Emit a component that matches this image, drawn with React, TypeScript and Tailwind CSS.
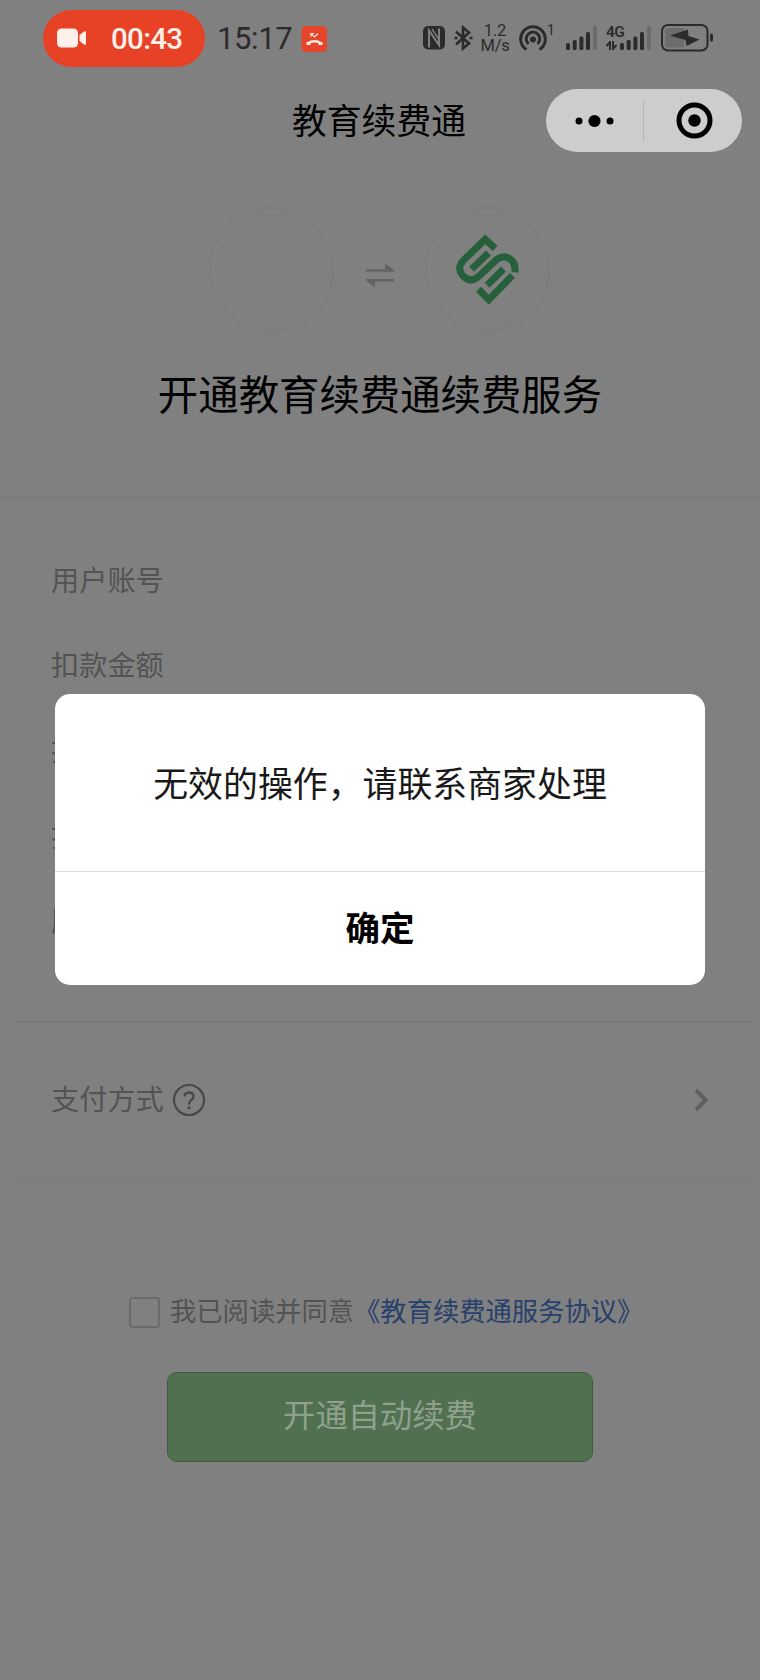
import React from "react";

const rows = ["用户账号", "扣款金额", "扣款周期", "扣款时间", "服务说明"];

function SignalBars() {
  return (
    <g fill="#2b2b2b">
      <rect x="0" y="17" width="4" height="7" rx="1.5" />
      <rect x="6.7" y="14" width="4" height="10" rx="1.5" />
      <rect x="13.4" y="10.5" width="4" height="13.5" rx="1.5" />
      <rect x="20" y="6" width="4" height="18" rx="1.5" />
      <rect x="27" y="0" width="4" height="24" rx="1.5" fill="#6b6b6b" />
    </g>
  );
}

function StatusBar() {
  return (
    <header className="flex h-[76px] items-center pl-[43px] font-[Roboto,sans-serif]">
      <div className="flex h-[57px] w-[162px] items-center rounded-full bg-[#e84226] pl-[14px] text-[#fff0ea]">
        <svg width="30" height="20" viewBox="0 0 30 20" fill="currentColor">
          <rect x="0" y="0.5" width="21" height="19" rx="4.5" />
          <path d="M22.5 7 27 3.6Q29 2.5 29 4.5V15.5Q29 17.5 27 16.4L22.5 13Z" />
        </svg>
        <span className="mt-[3px] ml-[24px] text-[29.5px] leading-none font-medium tracking-[-0.7px]">00:43</span>
      </div>
      <span className="ml-[12px] w-[77px] text-[31px] leading-none tracking-[-0.4px] whitespace-nowrap text-[#2b2b2b]">15:17</span>
      <svg className="mt-[2px] ml-[7px]" width="28" height="28" viewBox="0 0 28 28">
        <rect x="0.5" y="1" width="25.5" height="26" rx="4.5" fill="#e6452c" />
        <path d="M6.500 18.500Q13.500 14 20.500 18.500" fill="none" stroke="#ffe9df" strokeWidth="2.500" />
        <path d="M5.500 17v3h4v-2.500M21.500 17v3h-4v-2.500" fill="#ffe9df" />
        <path d="M10 11.500V8.500h3M10 8.500 13.500 12 17 8.500" fill="none" stroke="#ffe9df" strokeWidth="1.200" />
      </svg>
      <svg className="ml-[94px]" width="23" height="24" viewBox="0 0 23 24">
        <rect x="0" y="0" width="22" height="23.500" rx="5" fill="#2b2b2b" />
        <path d="M6 21.500V4.500L16 19V2.500" fill="none" stroke="#808080" strokeWidth="2" />
        <path d="M9 3 16 13.500" fill="none" stroke="#808080" strokeWidth="1.400" />
      </svg>
      <svg className="ml-[8px]" width="19" height="26" viewBox="0 0 19 26" fill="none" stroke="#2b2b2b" strokeWidth="2.600">
        <path d="M2 6.500 15 18.500 9 23.500V2.500L15 7.500 2 19.500" />
        <path d="M0.500 13h3M15.500 13h3" />
      </svg>
      <div className="ml-[7px] flex w-[30px] flex-col items-center text-[16.5px] leading-[15.5px] tracking-[-0.2px] text-[#2b2b2b]">
        <span>1.2</span>
        <span>M/s</span>
      </div>
      <svg className="ml-[9px]" width="28" height="27" viewBox="0 0 28 27" fill="none" stroke="#2b2b2b" strokeWidth="3">
        <path d="M7.500 24.500A12.300 12.300 0 1 1 20.500 24.500" />
        <path d="M9.500 19A6.800 6.800 0 1 1 18.500 19" />
        <circle cx="14" cy="14.500" r="3" fill="#2b2b2b" stroke="none" />
      </svg>
      <span className="w-[8px] self-start pt-[23px] text-[14px] leading-[14px] text-[#2b2b2b]">1</span>
      <svg className="ml-[11px]" width="32" height="24" viewBox="0 0 32 24"><SignalBars /></svg>
      <div className="relative ml-[22px] h-[24px] w-[32px]">
        <svg width="32" height="24" viewBox="0 0 32 24"><SignalBars /></svg>
        <span className="absolute top-[-1px] left-[-14px] text-[15.5px] leading-[14px] font-semibold tracking-[-0.7px] text-[#2b2b2b]">4G</span>
        <svg className="absolute top-[15px] left-[-14px]" width="11" height="9" viewBox="0 0 11 9" fill="none" stroke="#2b2b2b" strokeWidth="2">
          <path d="M4 9V1L0.500 5M7 0V8L10.500 4" />
        </svg>
      </div>
      <svg className="ml-[9px]" width="53" height="28" viewBox="0 0 53 28">
        <rect x="1" y="1" width="45.500" height="25.500" rx="6" fill="none" stroke="#2b2b2b" strokeWidth="2" />
        <path d="M7 4H23V23.500H7Q4 23.500 4 20.500V7Q4 4 7 4Z" fill="#6c6c6c" />
        <path d="M9 11.500 27 5.500 27.500 12 38.500 15.500 25.500 22 24.500 16Z" fill="#2b2b2b" />
        <rect x="49" y="9.500" width="3" height="8" rx="1.500" fill="#2b2b2b" />
      </svg>
    </header>
  );
}

function TitleBar() {
  return (
    <div className="flex h-[89px] items-start pl-[292px]">
      <h1 className="mt-[17px] w-[175px] text-[34.8px] leading-[52px] whitespace-nowrap text-black">教育续费通</h1>
      <div className="mt-[13px] ml-[79px] flex h-[63px] w-[196px] items-center rounded-full bg-[#cdcdcd]">
        <div className="flex w-[97px] justify-center">
          <svg width="40" height="14" viewBox="0 0 40 14">
            <circle cx="4" cy="7" r="3.500" />
            <circle cx="19.500" cy="7" r="6.100" />
            <circle cx="35" cy="7" r="3.500" />
          </svg>
        </div>
        <div className="h-[42px] w-px bg-[#b4b4b4]" />
        <svg className="ml-[32px]" width="37" height="37" viewBox="0 0 37 37">
          <circle cx="18.500" cy="18.500" r="15.500" fill="none" stroke="#000" strokeWidth="5" />
          <circle cx="18.500" cy="18.500" r="6.200" />
        </svg>
      </div>
    </div>
  );
}

function Modal() {
  return (
    <div role="dialog" className="absolute top-[694px] left-[55px] flex h-[291px] w-[650px] flex-col rounded-[15px] bg-white text-center">
      <p className="h-[178px] border-b border-[#dedede] pt-[62px] text-[34.9px] leading-[52px] text-[#191919]">无效的操作，请联系商家处理</p>
      <button className="flex-1 pb-[5px] text-[34.5px] leading-[52px] font-bold text-black">确定</button>
    </div>
  );
}

export default function App() {
  return (
    <div className="relative h-[1680px] w-[760px] overflow-hidden bg-[#808080] font-['Noto_Sans_CJK_SC',sans-serif]">
      <StatusBar />
      <TitleBar />
      <section className="h-[333px] border-b border-[#7a7a7a] pt-[42px]">
        <div className="flex items-center pl-[209px]">
          <div className="h-[125px] w-[125px] rounded-full border-2 border-[#7d7d7d]" />
          <svg className="mt-[11px] ml-[31px]" width="30" height="24" viewBox="0 0 30 24" fill="#636363">
            <path d="M1 6.200H20V0.500L29 7V8.800H1ZM29 16V18.600H10V24.500L1 17.500V16Z" />
          </svg>
          <div className="ml-[30px] flex h-[125px] w-[125px] items-center justify-center rounded-full border-2 border-[#7d7d7d]">
            <svg width="67" height="73" viewBox="765 98 200 219" fill="none" stroke="#26603a" strokeWidth="21">
              <path d="M888 144 858 117 793 180Q772 202 790 225Q813 250 838 229L892 178Q916 160 938 180Q950 192 947 216" />
              <path d="M868 158 817 207M913 206 864 255M940 225 869 298 838 267" />
            </svg>
          </div>
        </div>
        <h2 className="mt-[31px] text-center text-[40.4px] leading-[60px] text-black">开通教育续费通续费服务</h2>
      </section>
      <section className="mr-[8px] ml-[16px] flex h-[525px] flex-col border-b-2 border-[#797979] pt-[38px] pl-[35px] text-[28.2px] text-[#535353]">
        {rows.map((label) => (
          <div key={label} className="h-[85.2px] leading-[85px]">{label}</div>
        ))}
      </section>
      <section className="mr-[8px] ml-[16px] flex h-[156px] items-center border-b border-[#7a7a7a] pl-[35px] text-[28.2px] text-[#535353]">
        <span className="-mt-[6px] leading-[42px]">支付方式</span>
        <svg className="-mt-[2px] ml-[8px]" width="34" height="34" viewBox="0 0 34 34" fill="none" stroke="#484848" strokeWidth="2.200">
          <circle cx="17" cy="17" r="15" />
          <path d="M12.500 13.500Q12.800 9.500 17 9.500Q21.500 9.500 21.500 13.500Q21.500 15.500 19 17.300Q17 18.700 17 21.500" strokeWidth="2.400" />
          <circle cx="17" cy="24.800" r="1.600" fill="#484848" stroke="none" />
        </svg>
        <svg className="-mt-[2px] mr-[43px] ml-auto" width="15" height="24" viewBox="0 0 15 24" fill="none" stroke="#606060" strokeWidth="4">
          <path d="M2 2 11.500 12 2 22" />
        </svg>
      </section>
      <div className="mt-[111px] flex h-[40px] items-center pl-[129px] text-[26.3px] leading-[40px] text-[#535353]">
        <span className="mt-[5px] h-[31px] w-[31px] rounded-[3px] border-2 border-[#6b6b6b]" />
        <span className="ml-[10px] whitespace-nowrap">我已阅读并同意</span>
        <a className="whitespace-nowrap text-[#28406c]">《教育续费通服务协议》</a>
      </div>
      <button className="mt-[42px] ml-[167px] block h-[90px] w-[426px] rounded-[10px] border border-[#3f5b40] bg-[#507050] pb-[8px] text-[32.3px] leading-[48px] text-[#8fa18d]">开通自动续费</button>
      <Modal />
    </div>
  );
}
